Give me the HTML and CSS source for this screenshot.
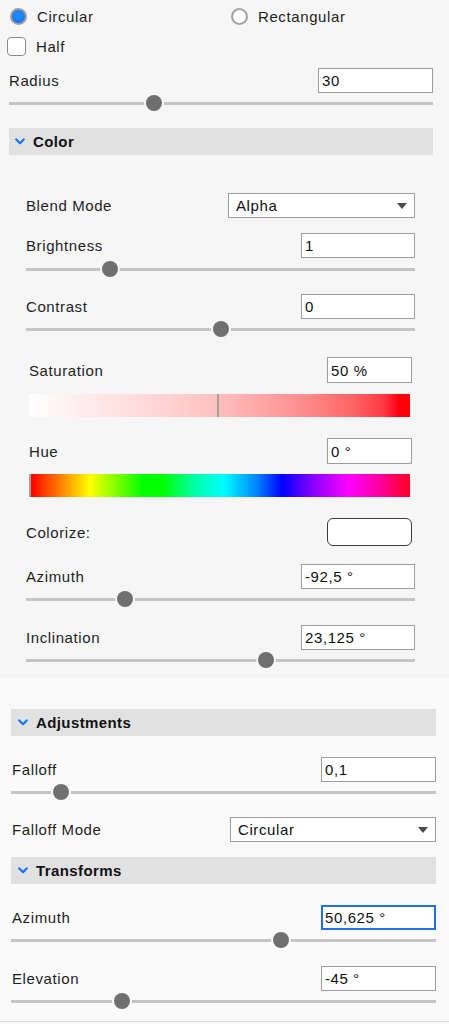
FILE: index.html
```html
<!DOCTYPE html>
<html>
<head>
<meta charset="utf-8">
<link rel="stylesheet" href="styles.css">
</head>
<body>
<div class="panel-top">
  <div class="shape-block">
    <div class="radio-row">
      <label class="radio-item"><span class="radio checked"></span><span>Circular</span></label>
      <label class="radio-item"><span class="radio"></span><span>Rectangular</span></label>
    </div>
    <div class="check-row">
      <span class="checkbox"></span><span>Half</span>
    </div>
    <div class="field-row r-radius">
      <span class="label">Radius</span>
      <input class="num w115" type="text" value="30">
    </div>
    <div class="slider s-after"><span class="thumb" style="left:34.2%"></span></div>
  </div>

  <section class="color-section">
    <div class="section-header">
      <svg class="chev" width="10" height="7" viewBox="0 0 10 7"><path d="M1.3 1.4 L5 5.2 L8.7 1.4" fill="none" stroke="#1677f2" stroke-width="2.2" stroke-linecap="round" stroke-linejoin="round"/></svg>
      <span>Color</span>
    </div>
    <div class="color-body">
      <div class="field-row">
        <span class="label">Blend Mode</span>
        <div class="select w187"><span>Alpha</span><svg width="10" height="6" viewBox="0 0 10 6"><path d="M0 0 H10 L5 6 Z" fill="#4a4a4a"/></svg></div>
      </div>
      <div class="field-row mt15">
        <span class="label">Brightness</span>
        <input class="num w114" type="text" value="1">
      </div>
      <div class="slider mt3"><span class="thumb" style="left:21.6%"></span></div>
      <div class="field-row mt17">
        <span class="label">Contrast</span>
        <input class="num w114" type="text" value="0">
      </div>
      <div class="slider s-after"><span class="thumb" style="left:50.1%"></span></div>

      <div class="color-group">
        <div class="field-row h26 mt20">
          <span class="label">Saturation</span>
          <input class="num w85" type="text" value="50 %">
        </div>
        <div class="bar sat-bar"><span class="marker" style="left:49.3%"></span></div>
        <div class="field-row h26 mt21">
          <span class="label">Hue</span>
          <input class="num w85" type="text" value="0 °">
        </div>
        <div class="bar hue-bar"><span class="marker" style="left:0%"></span></div>
      </div>

      <div class="field-row h28 mt21">
        <span class="label">Colorize:</span>
        <span class="swatch"></span>
      </div>
      <div class="field-row mt18">
        <span class="label">Azimuth</span>
        <input class="num w114" type="text" value="-92,5 °">
      </div>
      <div class="slider s-after"><span class="thumb" style="left:25.4%"></span></div>
      <div class="field-row mt18">
        <span class="label">Inclination</span>
        <input class="num w114" type="text" value="23,125 °">
      </div>
      <div class="slider s-after"><span class="thumb" style="left:61.7%"></span></div>
    </div>
  </section>
</div>

<div class="panel-bottom">
  <section class="sub-section">
    <div class="section-header">
      <svg class="chev" width="10" height="7" viewBox="0 0 10 7"><path d="M1.3 1.4 L5 5.2 L8.7 1.4" fill="none" stroke="#1677f2" stroke-width="2.2" stroke-linecap="round" stroke-linejoin="round"/></svg>
      <span>Adjustments</span>
    </div>
    <div class="sub-body">
      <div class="field-row mt21">
        <span class="label">Falloff</span>
        <input class="num w115" type="text" value="0,1">
      </div>
      <div class="slider s-after"><span class="thumb" style="left:11.8%"></span></div>
      <div class="field-row mt17">
        <span class="label">Falloff Mode</span>
        <div class="select w206"><span>Circular</span><svg width="10" height="6" viewBox="0 0 10 6"><path d="M0 0 H10 L5 6 Z" fill="#4a4a4a"/></svg></div>
      </div>
    </div>
  </section>
  <section class="sub-section mt15">
    <div class="section-header">
      <svg class="chev" width="10" height="7" viewBox="0 0 10 7"><path d="M1.3 1.4 L5 5.2 L8.7 1.4" fill="none" stroke="#1677f2" stroke-width="2.2" stroke-linecap="round" stroke-linejoin="round"/></svg>
      <span>Transforms</span>
    </div>
    <div class="sub-body">
      <div class="field-row mt21">
        <span class="label">Azimuth</span>
        <input class="num w115 focused" type="text" value="50,625 °">
      </div>
      <div class="slider s-after"><span class="thumb" style="left:63.5%"></span></div>
      <div class="field-row mt18">
        <span class="label">Elevation</span>
        <input class="num w115" type="text" value="-45 °">
      </div>
      <div class="slider s-after"><span class="thumb" style="left:26.1%"></span></div>
    </div>
  </section>
</div>
</body>
</html>
```

FILE: styles.css
```css
* { box-sizing: border-box; }

html, body {
  margin: 0;
  padding: 0;
}

body {
  width: 449px;
  background: #fafafa;
  font-family: "Liberation Sans", Arial, sans-serif;
  font-size: 15px;
  letter-spacing: 0.6px;
  color: #1e1e1e;
}

.panel-top {
  background: #f6f6f6;
  padding-bottom: 10px;
}

.shape-block {
  padding: 0 16px 0 9px;
}

.radio-row {
  height: 32px;
  display: grid;
  grid-template-columns: 221px auto;
  align-items: center;
  padding-left: 1px;
}

.radio-item {
  display: flex;
  align-items: center;
  gap: 10px;
}

.radio {
  width: 17px;
  height: 17px;
  border-radius: 50%;
  background: #fff;
  border: 2px solid #a2a2a2;
  flex: none;
}

.radio.checked {
  background: radial-gradient(circle at 50% 40%, #2a8dff 0%, #0b6ff2 100%);
  border: 2px solid #9c9c9c;
}

.check-row {
  height: 28px;
  display: flex;
  align-items: center;
  gap: 10px;
  margin-left: -2px;
}

.checkbox {
  width: 19px;
  height: 19px;
  border: 1.5px solid #8a8a8a;
  border-radius: 4px;
  background: #fff;
  flex: none;
}

.field-row {
  height: 25px;
  display: flex;
  align-items: center;
  justify-content: space-between;
}

.r-radius { margin-top: 8px; }

.h26 { height: 26px; }
.h28 { height: 28px; }

.mt3 { margin-top: 3px; }
.mt15 { margin-top: 15px; }
.mt17 { margin-top: 17px; }
.mt18 { margin-top: 18px; }
.mt20 { margin-top: 20px; }
.mt21 { margin-top: 21px; }

.num {
  height: 100%;
  border: 1px solid #9d9d9d;
  background: #fff;
  font-family: inherit;
  font-size: 15px;
  letter-spacing: 0.6px;
  color: #111;
  padding: 0 3px;
  margin: 0;
  outline: none;
  border-radius: 0;
}

.num.focused {
  border-color: #1f6fe6;
  box-shadow: inset 0 0 0 1px #1f6fe6;
}

.w85 { width: 85px; }
.w114 { width: 114px; }
.w115 { width: 115px; }
.w187 { width: 187px; }
.w206 { width: 206px; }

.select {
  height: 100%;
  border: 1px solid #9d9d9d;
  background: #fff;
  display: flex;
  align-items: center;
  justify-content: space-between;
  padding: 0 7px 0 7px;
  color: #111;
}

.slider {
  position: relative;
  height: 16px;
}

.s-after { margin-top: 2px; }

.slider::before {
  content: "";
  position: absolute;
  left: 0;
  right: 0;
  top: 6.5px;
  height: 3px;
  background: #c5c5c5;
}

.thumb {
  position: absolute;
  top: 0;
  width: 16px;
  height: 16px;
  border-radius: 50%;
  background: #707070;
  transform: translateX(-50%);
  box-shadow: 0 0 0 2px #f6f6f6;
}

.section-header {
  height: 27px;
  background: #e1e1e1;
  display: flex;
  align-items: center;
  font-weight: bold;
  color: #111;
  letter-spacing: 0.4px;
}

.chev {
  flex: none;
  margin-left: 6px;
  margin-right: 8px;
}

.color-section {
  margin: 17px 16px 0 9px;
}

.color-body {
  padding: 38px 18px 0 17px;
}

.color-group {
  padding: 0 3px;
}

.bar {
  position: relative;
  height: 23px;
  margin-right: 2px;
}

.sat-bar {
  margin-top: 11px;
  background: linear-gradient(to right, #ffffff 0%, #ffeeee 12%, #ffdada 30%, #ffc2c2 48%, #ffa8a8 60%, #ff8a8a 73%, #ff6464 85%, #ff3a44 93%, #ff0010 97%, #ff0000 100%);
}

.hue-bar {
  margin-top: 10px;
  background: linear-gradient(to right, #ff0000 0.5%, #ff8c00 9%, #ffff00 16%, #00ff00 30%, #00ff00 35%, #00ffa0 43%, #00ffff 51%, #0080ff 60%, #0000ff 66.5%, #8000ff 74%, #ff00ff 84%, #ff00a0 92%, #ff0030 99%);
}

.marker {
  position: absolute;
  top: 0;
  bottom: 0;
  width: 2px;
  background: #a2a2a2;
}

.swatch {
  width: 85px;
  height: 28px;
  margin-right: 3px;
  background: #fff;
  border: 1.5px solid #3d3d3d;
  border-radius: 6px;
}

.panel-bottom {
  padding: 31px 13px 12px 11px;
  border-bottom: 1px solid #d8d8d8;
}

.sub-section .section-header .chev {
  margin-left: 7px;
}

.sub-body .label {
  padding-left: 1px;
}

.sub-body .thumb {
  box-shadow: 0 0 0 2px #fafafa;
}
```
